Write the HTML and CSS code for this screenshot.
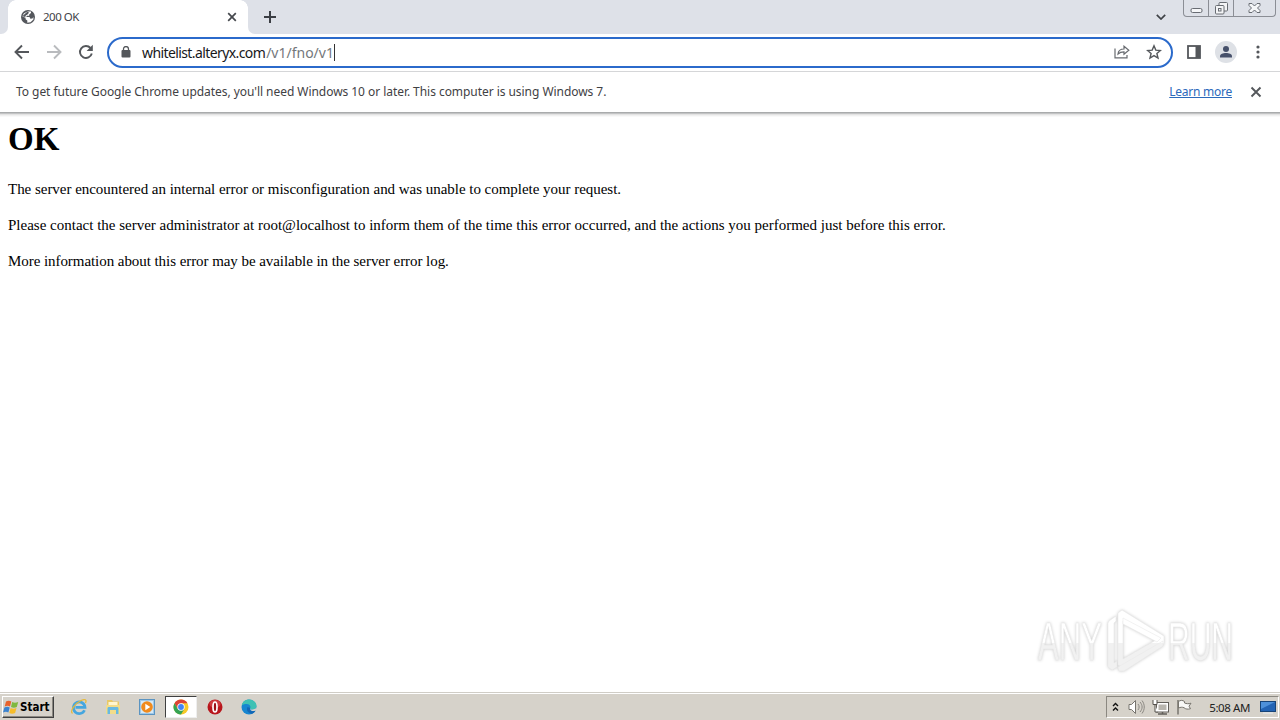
FILE: index.html
```html
<!DOCTYPE html>
<html lang="en">
<head>
    <meta charset="UTF-8">
    <meta name="viewport" content="width=device-width, initial-scale=1.0">
    <title>200 OK</title>
    <link rel="stylesheet" href="styles.css">
</head>
<body>
    <div class="tab-strip">
        <div class="strip-edge"></div>
        <div class="tab">
            <svg class="globe" width="14" height="14" viewBox="0 0 14 14">
                <circle cx="7" cy="7" r="7" fill="#54575c"/>
                <path d="M6.500 1.500h3.500v1.500L8.200 4.500v1.200H6l-.8 1.400h3.300l.9 1.700 2-.3 1-1.500v2.500L9.500 12.300 6.300 12.800v-2.300L4.600 9.300V7.800L1.400 6.600 2.800 3.500z" fill="#fff"/>
                <path d="M6.500 1.500L8 2.800 6.500 4.600 4.800 5.500 4.200 7 1.300 6.200" fill="#54575c"/>
            </svg>
            <span class="tab-title">200 OK</span>
            <svg class="tab-close" width="10" height="10" viewBox="0 0 10 10"><path d="M1.200 1.200l7.600 7.600M8.800 1.200L1.200 8.800" stroke="#45484d" stroke-width="1.700"/></svg>
        </div>
        <div class="strip-rest">
            <svg class="new-tab" width="12" height="12" viewBox="0 0 12 12"><path d="M6 0v12M0 6h12" stroke="#3b3e44" stroke-width="2"/></svg>
            <svg class="tab-search" width="10" height="6" viewBox="0 0 10 6"><path d="M.8.8L5 5 9.200.8" fill="none" stroke="#3f4247" stroke-width="1.700"/></svg>
            <div class="window-buttons">
                <div class="win-btn"><svg width="13" height="16" viewBox="0 0 13 16"><rect x="1" y="8.500" width="11" height="4" rx="1.500" fill="#f5f6f8" stroke="#686c73"/></svg></div>
                <div class="win-btn"><svg width="13" height="16" viewBox="0 0 13 16"><g fill="#f3f4f6" stroke="#686c73"><rect x="4" y="2.500" width="8.500" height="8.500" rx="1"/><rect x=".5" y="5.500" width="8.500" height="8.500" rx="1"/><rect x="3.500" y="8.500" width="2.500" height="2.500"/></g></svg></div>
                <div class="win-btn win-close"><svg width="13" height="16" viewBox="0 0 13 16"><path d="M1 3.500h3l2.500 2.500L9 3.500h3v2L9.500 8l2.500 2.500v2H9L6.500 10 4 12.500H1v-2L3.500 8 1 5.500z" fill="#f5f6f8" stroke="#686c73"/></svg></div>
            </div>
        </div>
    </div>

    <div class="toolbar">
        <svg class="nav" width="16" height="16" viewBox="0 0 16 16"><path d="M15 8H2M8 1.500L1.500 8 8 14.500" fill="none" stroke="#54575b" stroke-width="1.900"/></svg>
        <svg class="nav" width="16" height="16" viewBox="0 0 16 16"><path d="M1 8h13M8 1.500L14.500 8 8 14.500" fill="none" stroke="#b9bbbe" stroke-width="1.900"/></svg>
        <svg class="nav" width="16" height="16" viewBox="0 0 16 16"><path d="M13.800 9.500A6 6 0 1 1 12.500 4" fill="none" stroke="#54575b" stroke-width="1.900"/><path d="M14.800.8V7H8.600z" fill="#54575b"/></svg>
        <div class="omnibox">
            <svg class="lock" width="10" height="12" viewBox="0 0 10 12"><rect x=".5" y="4" width="9" height="7.500" rx="1" fill="#54575b"/><path d="M2.500 5V3a2.500 2.500 0 0 1 5 0v2" fill="none" stroke="#54575b" stroke-width="1.300"/></svg>
            <span class="host">whitelist.alteryx.com</span><span class="path">/v1/fno/v1</span><span class="caret"></span>
            <svg class="share" width="16" height="14" viewBox="0 0 16 14"><g fill="none" stroke="#686b70" stroke-width="1.200"><path d="M1 3.500v9.300h12V10"/><path d="M4 9c.3-3.300 2.500-5 6-5V1.200L14.800 5.200 10 9.200V6.800C7.500 6.800 5.500 7.500 4 9z"/></g></svg>
            <svg class="star" width="16" height="16" viewBox="0 0 16 16"><path d="M8 1.800l1.800 4.300 4.600.4-3.500 3 1.100 4.600L8 11.600l-4 2.500 1.100-4.600-3.500-3 4.600-.4z" fill="none" stroke="#54575b" stroke-width="1.400"/></svg>
        </div>
        <svg class="panel-icon" width="14" height="14" viewBox="0 0 14 14"><rect x="1" y="1" width="12" height="12" fill="none" stroke="#54575b" stroke-width="1.800"/><path d="M8.500 1H13v12H8.500z" fill="#54575b"/></svg>
        <svg class="avatar" width="22" height="22" viewBox="0 0 22 22"><circle cx="11" cy="11" r="11" fill="#dee1e6"/><circle cx="11" cy="8" r="3" fill="#46506a"/><path d="M5 16.500v-1.300c0-2 3-3.200 6-3.200s6 1.200 6 3.200v1.300z" fill="#46506a"/></svg>
        <svg class="dots" width="4" height="14" viewBox="0 0 4 14"><g fill="#54575b"><circle cx="2" cy="2" r="1.600"/><circle cx="2" cy="7" r="1.600"/><circle cx="2" cy="12" r="1.600"/></g></svg>
    </div>

    <div class="infobar">
        <span class="info-text">To get future Google Chrome updates, you'll need Windows 10 or later. This computer is using Windows 7.</span>
        <a class="learn-more">Learn more</a>
        <svg class="info-close" width="12" height="12" viewBox="0 0 12 12"><path d="M1.500 1.500l9 9M10.500 1.500l-9 9" stroke="#54575b" stroke-width="1.900"/></svg>
    </div>

    <div class="page">
        <h1>OK</h1>
        <p class="line-one">The server encountered an internal error or misconfiguration and was unable to complete your request.</p>
        <p class="line-two">Please contact the server administrator at root@localhost to inform them of the time this error occurred, and the actions you performed just before this error.</p>
        <p class="line-three">More information about this error may be available in the server error log.</p>
        <svg class="watermark" width="212" height="72" viewBox="0 0 212 72">
            <defs>
                <linearGradient id="wm" x1="0" y1="0" x2="0" y2="66" gradientUnits="userSpaceOnUse">
                    <stop offset=".52" stop-color="#fff"/>
                    <stop offset=".52" stop-color="#f1f1f1"/>
                </linearGradient>
            </defs>
            <g fill="url(#wm)" stroke="#e9e9e9" stroke-width=".6" stroke-linejoin="round">
                <text x="4" y="51" textLength="64" lengthAdjust="spacingAndGlyphs">ANY</text>
                <path d="M75 12l7-5v5l-2 2v40l3-2v6l-5 3-4-3V14z"/>
                <path fill-rule="evenodd" d="M84 4l4-3 42 26v8L88 58l-4-2zM89 12v38l33-19z"/>
                <path d="M84 58l45-26v5L90 62h-5z"/>
                <path d="M89 15v-6l38 20-4 4z"/>
                <text x="134" y="51" textLength="65" lengthAdjust="spacingAndGlyphs">RUN</text>
            </g>
        </svg>
    </div>

    <div class="taskbar">
        <div class="start">
            <svg width="17" height="16" viewBox="0 0 17 16">
                <path d="M3 2.500c2-1.200 3.700-1 5.300 0L7 7.500C5.300 6.500 3.800 6.500 1.700 7.500z" fill="#e8622c"/>
                <path d="M9.200 3c1.800 1 3.600 1 6 0L13.800 8c-2 1-3.900 1-5.800 0z" fill="#7fb83e"/>
                <path d="M1.400 8.500c2-1 3.700-1 5.300 0l-1.300 5C3.700 12.500 2 12.500 0 13.500z" fill="#3c83cf"/>
                <path d="M7.600 9c1.800 1 3.700 1 5.900 0l-1.400 5c-2 1-4 1-5.800 0z" fill="#f6bd2b"/>
            </svg>
            <span>Start</span>
        </div>
        <div class="launch ie">
            <svg width="18" height="18" viewBox="0 0 18 18"><path d="M14.500 12.200A5.800 5.800 0 1 1 15 9.300H5.500" fill="none" stroke="#45a6df" stroke-width="2.700"/><path d="M2.500 15.500C-.5 13 5 5.500 11 2.500c4-1.900 6-.8 4.500 2.500" fill="none" stroke="#e5b93b" stroke-width="1.300"/></svg>
        </div>
        <div class="launch">
            <svg width="16" height="16" viewBox="0 0 16 16"><path d="M2 1h5l1 1.500h6V14H2z" fill="#e9c967"/><path d="M3.500 3h9v5h-9z" fill="#fff6cf"/><path d="M1 6h14v9H1z" fill="#f2dc8a"/><path d="M2.500 15V9.500c0-1 .5-1.500 1.500-1.500h8c1 0 1.500.5 1.500 1.500V15H11v-4H5v4z" fill="#67b9e2"/></svg>
        </div>
        <div class="launch">
            <svg width="16" height="16" viewBox="0 0 16 16"><rect x=".5" y=".5" width="15" height="15" fill="#9fc9e9" stroke="#5b94c1"/><rect x="2" y="2" width="12" height="12" fill="#d6e9f6"/><circle cx="8" cy="8" r="5.800" fill="#f08a1d"/><path d="M6.300 4.800L11.300 8l-5 3.200z" fill="#fff"/></svg>
        </div>
        <div class="launch active">
            <svg width="16" height="16" viewBox="0 0 16 16"><circle cx="8" cy="8" r="7.500" fill="#f7c928"/><path d="M1.500 4.250A7.500 7.500 0 0 1 14.500 4.250H8L4.750 9.900z" fill="#dd4336"/><path d="M1.500 4.250A7.500 7.500 0 0 0 8 15.500L11.250 9.900H4.750z" fill="#35a353"/><circle cx="8" cy="8" r="3.700" fill="#fff"/><circle cx="8" cy="8" r="2.900" fill="#4285f4"/></svg>
        </div>
        <div class="launch">
            <svg width="16" height="16" viewBox="0 0 16 16"><circle cx="8" cy="8" r="7.500" fill="#b8161c"/><ellipse cx="8" cy="5" rx="5.500" ry="4" fill="#cf3b3f"/><ellipse cx="8" cy="8" rx="2" ry="5" fill="#9c1015" stroke="#fff" stroke-width="1.700"/></svg>
        </div>
        <div class="launch">
            <svg width="16" height="16" viewBox="0 0 16 16"><circle cx="8" cy="8" r="7.500" fill="#1686d0"/><path d="M.7 6.500C1.500 2.500 4.500.5 8 .5c4.500 0 7.500 3 7.500 6.300 0 2.500-2 3.700-4.300 3.700-1.800 0-2.700-.7-2-1.500C10 7.500 8.800 5 5.500 5 3.300 5 1.500 5.500.7 6.500z" fill="#3fc1b4"/><path d="M9.200 9c-1 3 2 4 5.400 2.500-.8 1.600-2.100 2.700-3.600 3.300C6.500 14 5 11 6.500 8z" fill="#1467b5"/><path d="M9.200 9c-.7.800.2 1.500 2 1.500 2 0 3.700-.8 4.200-2.500l.6 3.500-2 .3c-2 .7-5.400.2-4.800-2.800z" fill="#d6d2ca"/></svg>
        </div>
        <div class="tray">
            <svg class="chevrons" width="7" height="10" viewBox="0 0 7 10"><path d="M1 4l2.500-2.500L6 4M1 8.500L3.500 6 6 8.500" fill="none" stroke="#111" stroke-width="1.400"/></svg>
            <svg class="speaker" width="17" height="16" viewBox="0 0 17 16"><path d="M1 5.500h2.500L7.500 1.500v13l-4-4H1z" fill="#fff" stroke="#77746e"/><path d="M10 5c1.500 2 1.500 4 0 6M12 3c2.800 3.300 2.800 6.700 0 10M14 1.500c3 4 3 9 0 13" fill="none" stroke="#8b8882"/></svg>
            <svg class="network" width="17" height="16" viewBox="0 0 17 16"><rect x="5.500" y="4.500" width="10" height="7.500" fill="#b8b5ae" stroke="#fff" stroke-width="2"/><rect x="4.500" y="3.500" width="12" height="9.500" fill="none" stroke="#625f5a"/><path d="M6 15h9M10.500 13v2" stroke="#625f5a" stroke-width="1.500"/><path d="M1 1v4.500h4V1M3 5.500V13h3" fill="#fff" stroke="#55524d"/></svg>
            <svg class="flag" width="17" height="16" viewBox="0 0 17 16"><path d="M2.500 2.500c2-1.500 4-1.500 6 0v1.500c2 .8 4 1 6.500.2l-2 3 1.500 2.500c-2.500.8-5 .5-6.500-1-2-.8-3.500-.5-5.500.3z" fill="#f8f8f6" stroke="#77746e"/><path d="M2 1v14.500" stroke="#77746e" stroke-width="1.500"/></svg>
            <span class="clock">5:08 AM</span>
            <svg class="desktop" width="16" height="14" viewBox="0 0 16 14"><rect x=".5" y="1.500" width="15" height="10" fill="#2364b4" stroke="#174477"/><path d="M1 2h14L1 9z" fill="#4e91d9"/><path d="M3 13h10" stroke="#e8edf2"/></svg>
        </div>
    </div>
</body>
</html>
```

FILE: styles.css
```css
* {
    box-sizing: border-box;
}

body {
    display: flex;
    flex-direction: column;
    width: 1280px;
    height: 720px;
    margin: 0;
    overflow: hidden;
    background-color: #fff;
    font-family: "Noto Sans", sans-serif;
    white-space: nowrap;
}

svg {
    display: block;
    flex: none;
}

.tab-strip {
    display: flex;
    height: 34px;
    background-color: #fff;
}

.strip-edge {
    width: 8px;
    background-color: #dee1e8;
    border-bottom-right-radius: 7px;
}

/* the strip shows behind the rounded top corners of the tab */
.tab {
    display: flex;
    align-items: center;
    width: 240px;
    padding: 0 11px 0 13px;
    background: radial-gradient(circle at 8px 8px, #fff 7.500px, #dee1e8 8px) 0 0 / 8px 8px no-repeat,
        radial-gradient(circle at 0 8px, #fff 7.500px, #dee1e8 8px) 100% 0 / 8px 8px no-repeat;
}

.tab-title {
    margin-left: 8px;
    padding-bottom: 2px;
    color: #3f4247;
    font-size: 11.500px;
    letter-spacing: -0.5px;
}

.tab-close {
    margin-left: auto;
}

.strip-rest {
    display: flex;
    flex: 1;
    align-items: center;
    padding: 0 4px 0 16px;
    background-color: #dee1e8;
    border-bottom-left-radius: 7px;
}

.tab-search {
    margin-left: auto;
}

.window-buttons {
    display: flex;
    align-self: flex-start;
    width: 93px;
    height: 17px;
    margin-left: 17px;
    border: 1px solid #8b8e95;
    border-top: none;
    border-radius: 0 0 4px 4px;
}

.win-btn {
    display: flex;
    justify-content: center;
    width: 25px;
    border-right: 1px solid #8b8e95;
}

.win-close {
    flex: 1;
    border-right: none;
}

.toolbar {
    display: flex;
    align-items: center;
    height: 38px;
    padding: 0 20px 1px 14px;
    border-bottom: 1px solid #d5d6d8;
}

.nav {
    margin-right: 16px;
}

.omnibox {
    display: flex;
    align-items: center;
    width: 1066px;
    height: 31px;
    margin-left: -3px;
    padding: 0 9px 0 12px;
    border: 2px solid #2b6acb;
    border-radius: 16px;
    font-size: 14px;
}

.host {
    margin-left: 11px;
    color: #17181a;
    letter-spacing: -0.6px;
}

.path {
    margin-left: 1px;
    color: #74777b;
}

.caret {
    width: 1px;
    height: 17px;
    background-color: #333;
}

.share {
    margin-left: auto;
}

.star {
    margin-left: 16px;
}

.panel-icon {
    margin-left: 14px;
}

.avatar {
    margin-left: 14px;
}

.dots {
    margin-left: 19px;
}

.infobar {
    display: flex;
    align-items: center;
    height: 40px;
    padding: 0 18px 0 16px;
    color: #3f4144;
    font-size: 12px;
}

.info-text {
    padding-bottom: 2px;
    letter-spacing: -0.05px;
}

.learn-more {
    margin-left: auto;
    padding-bottom: 2px;
    color: #2b69bb;
    letter-spacing: -0.25px;
    text-decoration: underline;
}

.info-close {
    margin-left: 18px;
}

.page {
    position: relative;
    flex: 1;
    padding: 9px 8px 8px;
    background: linear-gradient(#a9abac 0 1px, #c2c3c4 1px 2px, #e3e3e3 2px 3px, #f0f0f0 3px 4px, #f9f9f9 4px 5px, #fff 5px 6px) 0 0 / 100% 6px no-repeat;
    font-family: "Liberation Serif", serif;
    font-size: 15px;
    color: #000;
}

.page h1 {
    margin: 0 0 22px;
    font-size: 33px;
    line-height: 37px;
}

.page p {
    margin: 0 0 18px;
    line-height: 18px;
}

.page .line-one {
    letter-spacing: -0.03px;
}

.page .line-three {
    letter-spacing: -0.06px;
}

.watermark {
    position: absolute;
    right: 34px;
    bottom: 11px;
    font-family: "Liberation Sans", sans-serif;
    font-size: 53px;
    filter: drop-shadow(0 0 1.500px #ccc);
}

.taskbar {
    display: flex;
    align-items: center;
    height: 28px;
    padding: 1px 1px 0 2px;
    background-color: #d6d2ca;
    border-top: 1px solid #d0cdc6;
    box-shadow: inset 0 1px #fff;
}

.start {
    display: flex;
    align-items: center;
    width: 52px;
    height: 22px;
    border: 1px solid;
    border-color: #fff #404040 #404040 #fff;
    box-shadow: inset -1px -1px #8b8881;
    color: #000;
    font-family: "DejaVu Sans Condensed", "DejaVu Sans", sans-serif;
    font-size: 11.500px;
    font-weight: bold;
}

.launch {
    display: flex;
    align-items: center;
    justify-content: center;
    width: 32px;
    height: 22px;
    margin-left: 2px;
}

.launch.ie {
    margin-left: 9px;
}

.launch.active {
    background-color: #fff;
    border: 1px solid;
    border-color: #404040 #eee #eee #404040;
}

.tray {
    display: flex;
    align-items: center;
    width: 173px;
    height: 22px;
    margin-left: auto;
    padding: 0 2px 0 5px;
    border: 1px solid;
    border-color: #8b8881 #fff #fff #8b8881;
}

.speaker {
    margin-left: 9px;
}

.network,
.flag {
    margin-left: 7px;
}

.clock {
    margin-left: auto;
    color: #222;
    font-size: 11.500px;
    letter-spacing: -0.4px;
}

.desktop {
    margin-left: 10px;
}
```
